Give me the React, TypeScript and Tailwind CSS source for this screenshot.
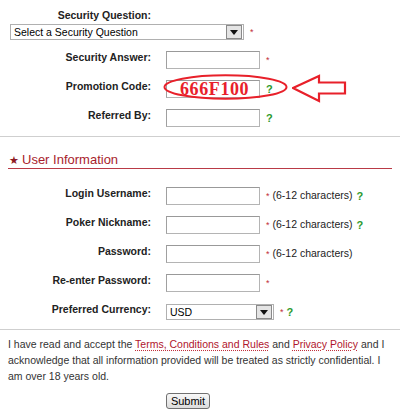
import React from 'react';

function Req() {
  return <span className="ml-[6px] text-[9px] leading-[9px] text-[#c22e3a]">*</span>;
}

function Help({ ml = 'ml-[5px]' }: { ml?: string }) {
  return <span className={`${ml} font-bold text-[11px] text-[#2c9a2c]`}>?</span>;
}

function TextBox() {
  return (
    <input
      type="text"
      className="w-[94px] h-[18px] border border-[#b4b4b4] border-t-[#999] border-l-[#a0a0a0] bg-white outline-none"
    />
  );
}

function FakeSelect({ width, text }: { width: string; text: string }) {
  return (
    <div className={`${width} h-[16px] flex items-center border border-[#b0b0b0] bg-white`}>
      <span className="flex-1 pl-[3px] text-[10.5px] leading-[14px] text-black">{text}</span>
      <span className="w-[16px] h-[14px] mr-px flex items-center justify-center border border-[#8a8a8a] bg-[#e4e4e4]">
        <svg width="8" height="5" viewBox="0 0 8 5">
          <path d="M0 0 L8 0 L4 5 Z" fill="#111" />
        </svg>
      </span>
    </div>
  );
}

function Row({ label, children }: { label: string; children: React.ReactNode }) {
  return (
    <div className="flex items-start h-[18px]">
      <div className="w-[151px] text-right font-bold leading-[12px] text-[#222]">{label}</div>
      <div className="relative ml-[15px] flex items-center h-[18px]">{children}</div>
    </div>
  );
}

function Chars({ help = true }: { help?: boolean }) {
  return (
    <>
      <Req />
      <span className="ml-[3px] text-[10.5px] text-[#222]">(6-12 characters)</span>
      {help && <Help ml="ml-[4px]" />}
    </>
  );
}

const linkCls =
  'text-[#b0152c] underline decoration-dotted decoration-[#c0303c] underline-offset-2';

export default function App() {
  return (
    <div className="w-[400px] h-[420px] bg-white font-['Liberation_Sans',Arial,sans-serif] text-[10.5px] text-[#222] overflow-hidden">
      {/* Security block */}
      <div className="pt-[9px]">
        <div className="w-[151px] text-right font-bold leading-[12px]">Security Question:</div>
        <div className="mt-[3px] ml-[10px] flex items-center">
          <FakeSelect width="w-[234px]" text="Select a Security Question" />
          <Req />
        </div>
        <div className="mt-[11px] flex flex-col gap-[11px]">
          <Row label="Security Answer:">
            <TextBox />
            <Req />
          </Row>
          <Row label="Promotion Code:">
            <TextBox />
            <Help ml="ml-[6px]" />
            {/* annotation drawn over the field */}
            <svg className="absolute left-[-3px] top-[-6px]" width="125" height="26" viewBox="0 0 125 26">
              <ellipse cx="62.5" cy="13" rx="61" ry="11.8" fill="none" stroke="#e8202a" strokeWidth="2" />
            </svg>
            <span className="absolute left-[14px] top-0 font-['Liberation_Serif',serif] font-bold text-[18px] leading-[18px] tracking-[0.6px] text-[#e8202a]">
              666F100
            </span>
            <svg className="absolute left-[126px] top-[-6px]" width="56" height="30" viewBox="0 0 56 30">
              <path
                d="M1 14 L27 2 L27 8.5 L53 8.5 L53 19.5 L27 19.5 L27 27 Z"
                fill="none"
                stroke="#e8202a"
                strokeWidth="2.2"
                strokeLinejoin="miter"
              />
            </svg>
          </Row>
          <Row label="Referred By:">
            <TextBox />
            <Help ml="ml-[6px]" />
          </Row>
        </div>
      </div>

      <div className="mt-[9px] h-px bg-[#cfcfcf]" />

      {/* User information */}
      <div className="mt-[15px] mx-[8px] h-[17px] flex items-center border-b border-[#b93a46]">
        <span className="ml-px text-[11px] leading-none text-[#8e1b24]">★</span>
        <span className="ml-[3px] text-[13px] leading-[16px] text-[#a81d2c]">User Information</span>
      </div>

      <div className="mt-[18px] flex flex-col gap-[11px]">
        <Row label="Login Username:">
          <TextBox />
          <Chars />
        </Row>
        <Row label="Poker Nickname:">
          <TextBox />
          <Chars />
        </Row>
        <Row label="Password:">
          <TextBox />
          <Chars help={false} />
        </Row>
        <Row label="Re-enter Password:">
          <TextBox />
          <Req />
        </Row>
        <Row label="Preferred Currency:">
          <FakeSelect width="w-[108px]" text="USD" />
          <Req />
          <Help ml="ml-[3px]" />
        </Row>
      </div>

      <div className="mt-[8px] h-px bg-[#cfcfcf]" />

      <p className="mt-[6px] px-[8px] text-[10.5px] leading-[16px] text-[#333]">
        {'I have read and accept the '}
        <a className={linkCls}>Terms, Conditions and Rules</a>
        {' and '}
        <a className={linkCls}>Privacy Policy</a>
        {' and I acknowledge that all information provided will be treated as strictly confidential. I am over 18 years old.'}
      </p>

      <div className="mt-[9px] pl-[166px]">
        <button className="w-[44px] h-[16px] rounded-[3px] border border-[#707070] bg-gradient-to-b from-[#f8f8f8] to-[#dcdcdc] text-[11px] leading-[14px] text-black">
          Submit
        </button>
      </div>
    </div>
  );
}
